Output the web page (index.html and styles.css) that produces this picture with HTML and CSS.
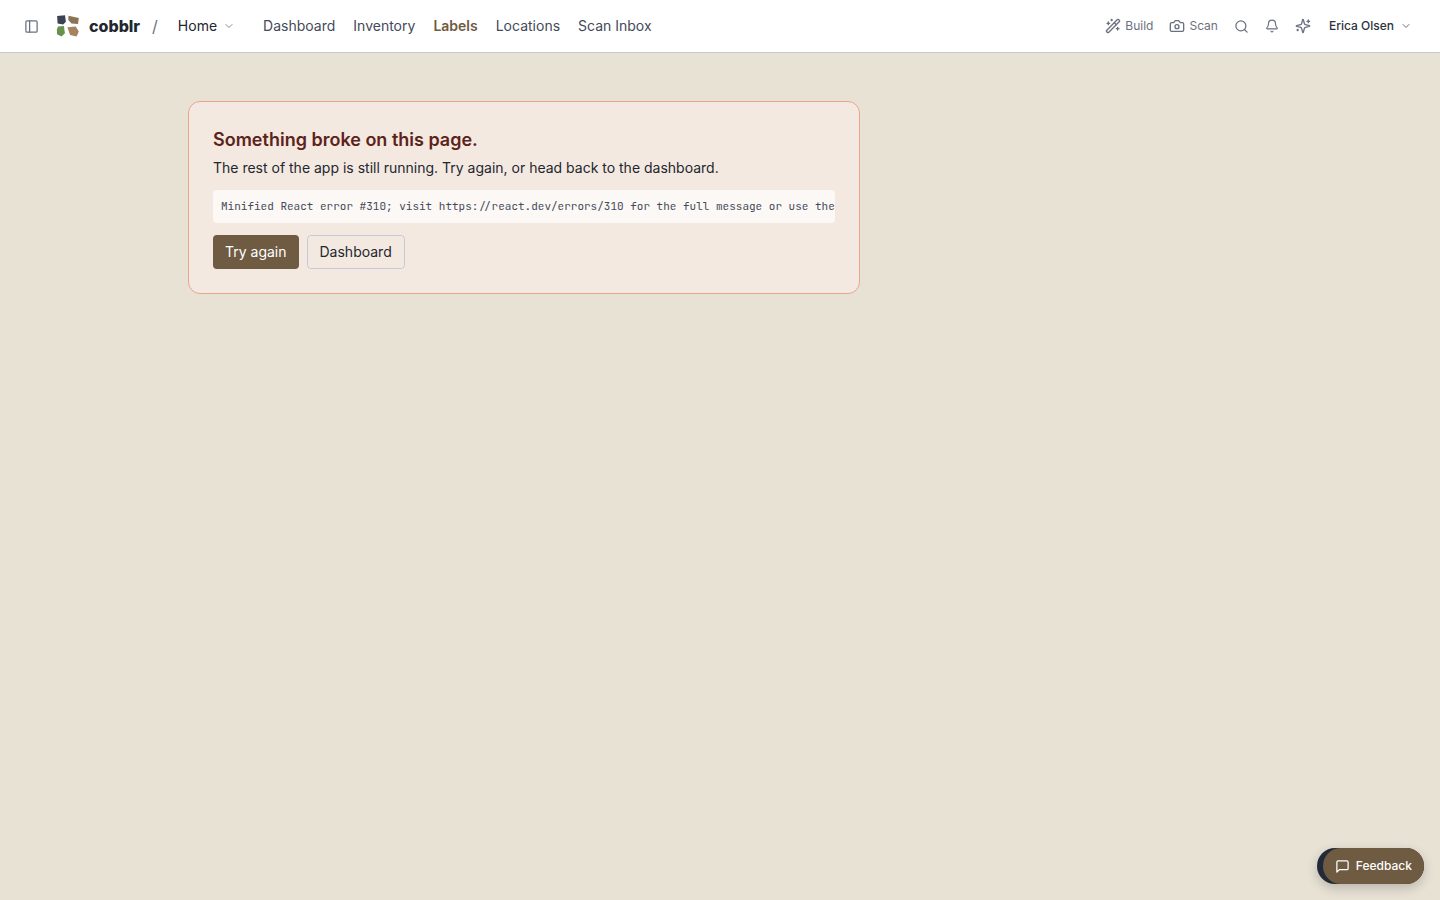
FILE: index.html
```html
<!DOCTYPE html>
<html lang="en">

<head>
  <meta charset="UTF-8" />
  <meta name="viewport" content="width=device-width, initial-scale=1.0" />
  <title>Labels - cobblr</title>
  <link rel="stylesheet" href="styles.css">
</head>

<body>
  <header class="topbar">
    <button class="icon-btn sidebar-toggle" type="button" aria-label="Toggle sidebar">
      <svg class="icon" viewBox="0 0 24 24"><rect x="3" y="3" width="18" height="18" rx="2" /><path d="M9 3v18" /></svg>
    </button>

    <a class="brand" href="#">
      <svg class="logo" viewBox="0 0 24 24" aria-hidden="true">
        <path fill="#3b4252" d="M1.1 2 9 1.2l.9 6.6-2.7 2.7-5.6-1z" />
        <path fill="#8b7355" d="M12.5 1.8l10.3 2.1-.8 6.2-6.5-.5-3.2-3.6z" />
        <path fill="#67914c" d="M2 12.4l5.9-.3 1 7.2-3.4 3.1L1 20.3.9 15.4z" />
        <path fill="#a58360" d="M11.4 13.2l8.4-.6 3 5-2.2 4.9-6.5-1.6z" />
      </svg>
      <span class="brand-name">cobblr</span>
    </a>
    <span class="slash">/</span>

    <button class="workspace" type="button">
      Home
      <svg class="icon chevron" viewBox="0 0 24 24"><path d="m6 9 6 6 6-6" /></svg>
    </button>

    <nav class="nav">
      <a href="#">Dashboard</a>
      <a href="#">Inventory</a>
      <a class="active" href="#">Labels</a>
      <a href="#">Locations</a>
      <a href="#">Scan Inbox</a>
    </nav>

    <div class="tools">
      <button class="tool" type="button">
        <svg class="icon icon-lg" viewBox="0 0 24 24"><path d="m21.64 3.64-1.28-1.28a1.21 1.21 0 0 0-1.72 0L2.36 18.64a1.21 1.21 0 0 0 0 1.72l1.28 1.28a1.2 1.2 0 0 0 1.72 0L21.64 5.36a1.2 1.2 0 0 0 0-1.72" /><path d="m14 7 3 3M5 6v4M19 14v4M10 2v2M7 8H3M21 16h-4M11 3H9" /></svg>
        Build
      </button>
      <button class="tool" type="button">
        <svg class="icon icon-lg" viewBox="0 0 24 24"><path d="M14.5 4h-5L7 7H4a2 2 0 0 0-2 2v9a2 2 0 0 0 2 2h16a2 2 0 0 0 2-2V9a2 2 0 0 0-2-2h-3z" /><circle cx="12" cy="13" r="3" /></svg>
        Scan
      </button>
      <button class="icon-btn" type="button" aria-label="Search">
        <svg class="icon" viewBox="0 0 24 24"><circle cx="11" cy="11" r="8" /><path d="m21 21-4.3-4.3" /></svg>
      </button>
      <button class="icon-btn" type="button" aria-label="Notifications">
        <svg class="icon icon-sm" viewBox="0 0 24 24"><path d="M10.27 21a2 2 0 0 0 3.46 0" /><path d="M3.26 15.33A1 1 0 0 0 4 17h16a1 1 0 0 0 .74-1.67C19.41 13.96 18 12.5 18 8A6 6 0 0 0 6 8c0 4.5-1.41 5.96-2.74 7.33" /></svg>
      </button>
      <button class="icon-btn" type="button" aria-label="Assistant">
        <svg class="icon icon-lg" viewBox="0 0 24 24"><path d="M9.94 15.5A2 2 0 0 0 8.5 14.06l-6.14-1.58a.5.5 0 0 1 0-.96L8.5 9.94A2 2 0 0 0 9.94 8.5l1.58-6.14a.5.5 0 0 1 .96 0l1.58 6.14a2 2 0 0 0 1.44 1.44l6.14 1.58a.5.5 0 0 1 0 .96l-6.14 1.58a2 2 0 0 0-1.44 1.44l-1.58 6.14a.5.5 0 0 1-.96 0z" /><path d="M20 3v4M22 5h-4M4 17v2M5 18H3" /></svg>
      </button>
      <button class="user" type="button">
        Erica Olsen
        <svg class="icon chevron" viewBox="0 0 24 24"><path d="m6 9 6 6 6-6" /></svg>
      </button>
    </div>
  </header>

  <main class="page">
    <section class="error-card" role="alert">
      <h1>Something broke on this page.</h1>
      <p>The rest of the app is still running. Try again, or head back to the dashboard.</p>
      <pre>Minified React error #310; visit https://react.dev/errors/310 for the full message or use the</pre>
      <div class="actions">
        <button class="btn btn-primary" type="button">Try again</button>
        <a class="btn" href="#">Dashboard</a>
      </div>
    </section>
  </main>

  <div class="feedback-wrap">
    <button class="feedback" type="button">
      <svg class="icon" viewBox="0 0 24 24"><path d="M21 15a2 2 0 0 1-2 2H7l-4 4V5a2 2 0 0 1 2-2h14a2 2 0 0 1 2 2z" /></svg>
      Feedback
    </button>
  </div>
</body>

</html>
```
FILE: styles.css
```css
* {
  box-sizing: border-box;
}

body {
  margin: 0;
  min-height: 100vh;
  background: #e8e2d5;
  color: #22272f;
  font-family: Inter, "Liberation Sans", sans-serif;
  font-size: 14px;
  line-height: 20px;
}

button {
  border: none;
  padding: 0;
  background: none;
  color: inherit;
  font: inherit;
  cursor: pointer;
}

a {
  color: inherit;
  text-decoration: none;
}

.icon {
  flex: none;
  width: 15px;
  height: 15px;
  fill: none;
  stroke: currentColor;
  stroke-width: 2;
  stroke-linecap: round;
  stroke-linejoin: round;
}

.icon-sm {
  width: 14px;
  height: 14px;
}

.icon-lg {
  width: 16px;
  height: 16px;
}

.chevron {
  width: 12px;
  height: 12px;
  color: #858b99;
}

/* top bar */
.topbar {
  display: flex;
  align-items: center;
  height: 53px;
  padding: 0 28px 0 24px;
  background: #fff;
  border-bottom: 1px solid #c5c9d6;
}

.icon-btn {
  display: flex;
  color: #6b7080;
}

.brand {
  display: flex;
  align-items: center;
  gap: 9px;
  margin-left: 17px;
}

.logo {
  width: 24px;
  height: 24px;
}

.brand-name {
  font-size: 16px;
  font-weight: 800;
}

.slash {
  margin-left: 12px;
  color: #6b7080;
  font-size: 16px;
}

.workspace {
  display: flex;
  align-items: center;
  gap: 6px;
  margin-left: 20px;
}

.nav {
  display: flex;
  gap: 18px;
  margin-left: 28px;
  color: #444a5a;
}

.nav .active {
  color: #6f5b42;
  font-weight: 600;
}

.tools {
  display: flex;
  align-items: center;
  gap: 16px;
  margin-left: auto;
  color: #6b7080;
  font-size: 12px;
}

.tool {
  display: flex;
  align-items: center;
  gap: 4px;
}

.user {
  display: flex;
  align-items: center;
  gap: 6px;
  margin-left: 2px;
  color: #2c3240;
  font-weight: 500;
}

.user .chevron {
  color: #6b7080;
}

/* error card */
.page {
  max-width: 1112px;
  margin: 0 auto;
  padding: 48px 24px;
}

.error-card {
  max-width: 672px;
  padding: 24px;
  background: #f4e9e0;
  border: 1px solid #eda28e;
  border-radius: 12px;
}

.error-card h1 {
  margin: 0 0 4px;
  color: #5c231b;
  font-size: 18px;
  font-weight: 600;
  line-height: 28px;
}

.error-card p {
  margin: 0 0 12px;
}

.error-card pre {
  margin: 0 0 12px;
  padding: 8px;
  overflow: hidden;
  background: #fcf8f5;
  border-radius: 4px;
  color: #444a5a;
  font-family: "JetBrains Mono", "Liberation Mono", monospace;
  font-size: 11px;
  line-height: 17px;
}

.actions {
  display: flex;
  gap: 8px;
}

.btn {
  padding: 6px 12px;
  border: 1px solid #c5c9d6;
  border-radius: 4px;
}

.btn-primary {
  padding: 7px 12px;
  border: none;
  background: #6f5b42;
  color: #fff;
}

/* feedback pill, with the dark one peeking out behind it */
.feedback-wrap {
  position: fixed;
  right: 16px;
  bottom: 16px;
  padding-left: 6px;
  background: #222a38;
  border-radius: 18px;
  box-shadow: 0 4px 12px rgba(0, 0, 0, 0.2);
}

.feedback {
  display: flex;
  align-items: center;
  gap: 6px;
  padding: 8px 12px;
  background: #6f5b42;
  border-radius: 18px;
  color: #fff;
  font-size: 12px;
  font-weight: 500;
}
```
